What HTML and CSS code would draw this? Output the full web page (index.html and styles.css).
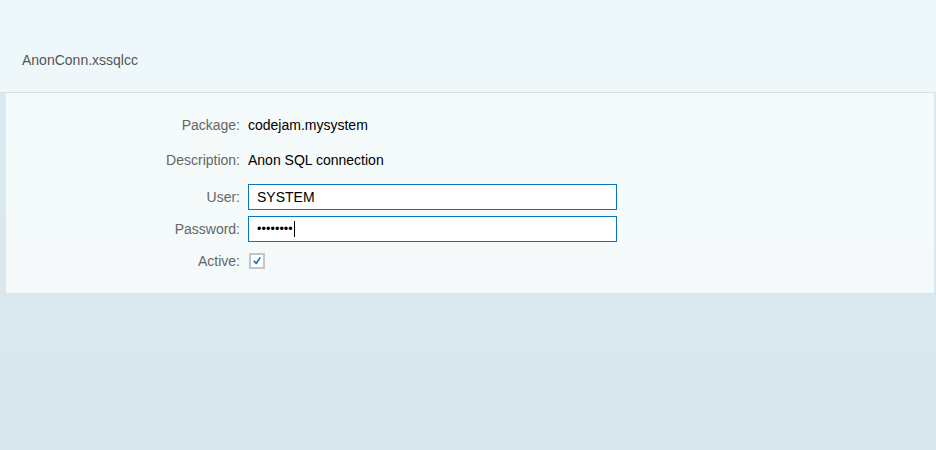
FILE: index.html
```html
<!DOCTYPE html>
<html>
<head>
<meta charset="utf-8">
<link rel="stylesheet" href="styles.css">
</head>
<body>
<header class="topbar">
  <div class="title">AnonConn.xssqlcc</div>
</header>
<main class="panel">
  <div class="row row-package">
    <span class="label">Package:</span>
    <span class="value">codejam.mysystem</span>
  </div>
  <div class="row row-desc">
    <span class="label">Description:</span>
    <span class="value">Anon SQL connection</span>
  </div>
  <div class="row row-user">
    <label class="label" for="user">User:</label>
    <input id="user" class="field" type="text" value="SYSTEM">
  </div>
  <div class="row row-pass">
    <span class="label">Password:</span>
    <div class="field field-pass" role="textbox"><span class="dots">••••••••</span><span class="caret"></span></div>
  </div>
  <div class="row row-active">
    <span class="label">Active:</span>
    <span class="checkbox">
      <svg viewBox="0 0 16 16" width="16" height="16"><path d="M4.3 8.3 L7 11.3 L11.8 3.8" fill="none" stroke="#0a74c0" stroke-width="2.2" stroke-linecap="round" stroke-linejoin="round"/></svg>
    </span>
  </div>
</main>
</body>
</html>
```

FILE: styles.css
```css
html, body {
  margin: 0;
  padding: 0;
}
body {
  width: 936px;
  height: 450px;
  background: linear-gradient(to bottom, #d8ecf1 0%, #dae6ee 100%);
  font-family: "Liberation Sans", Arial, Helvetica, sans-serif;
  font-size: 14px;
  overflow: hidden;
}
.topbar {
  height: 92px;
  background: #eef7f9;
  border-bottom: 1px solid #dcdfe0;
  display: flex;
  align-items: flex-end;
  box-sizing: content-box;
}
.title {
  color: #555;
  font-size: 14px;
  padding-left: 22px;
  padding-bottom: 24px;
}
.panel {
  margin: 0 2px 0 6px;
  background: linear-gradient(to bottom, #f4fafb, #f5f9fa);
  padding: 20px 0 21px 0;
  display: flex;
  flex-direction: column;
}
.row {
  display: flex;
  align-items: center;
  gap: 8px;
}
.label {
  width: 234px;
  text-align: right;
  color: #666;
  flex: none;
}
.value {
  color: #000;
}
.row-package { height: 24px; }
.row-desc { height: 24px; margin-top: 11px; }
.row-user { height: 26px; margin-top: 12px; }
.row-pass { height: 26px; margin-top: 6px; }
.row-active { height: 22px; margin-top: 8px; }
.field {
  box-sizing: border-box;
  width: 369px;
  height: 26px;
  border: 1px solid #0a74c0;
  background: #fff;
  margin: 0;
  padding: 0 8px;
  font-family: "Liberation Sans", Arial, sans-serif;
  font-size: 14px;
  color: #000;
  outline: none;
}
.field-pass {
  display: flex;
  align-items: center;
}
.dots {
  font-size: 12.5px;
  letter-spacing: 0.1px;
  line-height: 1;
}
.caret {
  display: inline-block;
  width: 1px;
  height: 16px;
  background: #000;
  margin-left: 1px;
}
.checkbox {
  box-sizing: border-box;
  width: 16px;
  height: 16px;
  border: 2px solid #c3c6c8;
  background: #fff;
  margin-left: 1px;
  display: flex;
  align-items: center;
  justify-content: center;
}
.checkbox svg {
  width: 14px;
  height: 14px;
  display: block;
}
```
